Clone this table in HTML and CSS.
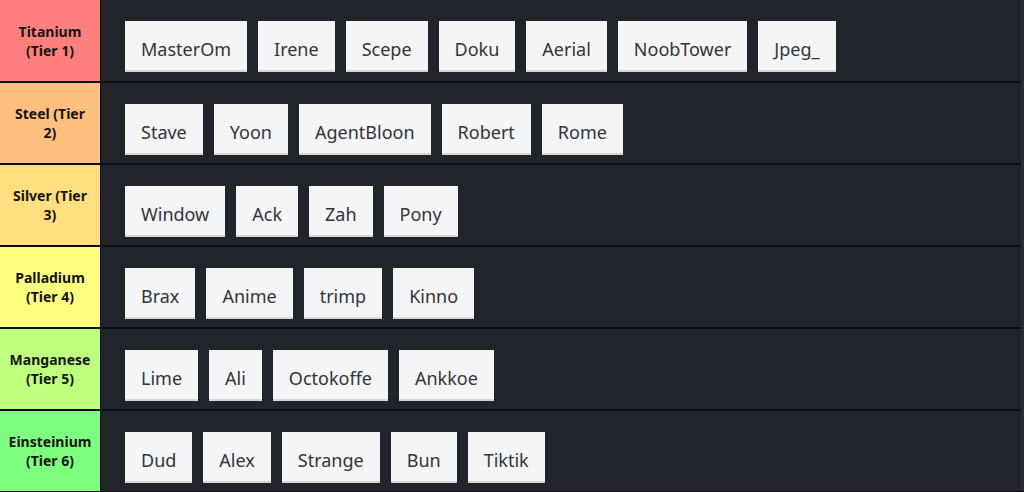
FILE: index.html
```html
<!DOCTYPE html>
<html>
<head>
<meta charset="utf-8">
<link rel="stylesheet" href="styles.css">
</head>
<body>
<div class="board">
  <div class="row">
    <div class="label t1">Titanium (Tier 1)</div>
    <div class="items">
      <div class="item">MasterOm</div><div class="item">Irene</div><div class="item">Scepe</div><div class="item">Doku</div><div class="item">Aerial</div><div class="item">NoobTower</div><div class="item">Jpeg_</div>
    </div>
  </div>
  <div class="row">
    <div class="label t2">Steel (Tier 2)</div>
    <div class="items">
      <div class="item">Stave</div><div class="item">Yoon</div><div class="item">AgentBloon</div><div class="item">Robert</div><div class="item">Rome</div>
    </div>
  </div>
  <div class="row">
    <div class="label t3">Silver (Tier 3)</div>
    <div class="items">
      <div class="item">Window</div><div class="item">Ack</div><div class="item">Zah</div><div class="item">Pony</div>
    </div>
  </div>
  <div class="row">
    <div class="label t4">Palladium (Tier 4)</div>
    <div class="items">
      <div class="item">Brax</div><div class="item">Anime</div><div class="item">trimp</div><div class="item">Kinno</div>
    </div>
  </div>
  <div class="row">
    <div class="label t5">Manganese (Tier 5)</div>
    <div class="items">
      <div class="item">Lime</div><div class="item">Ali</div><div class="item">Octokoffe</div><div class="item">Ankkoe</div>
    </div>
  </div>
  <div class="row">
    <div class="label t6">Einsteinium (Tier 6)</div>
    <div class="items">
      <div class="item">Dud</div><div class="item">Alex</div><div class="item">Strange</div><div class="item">Bun</div><div class="item">Tiktik</div>
    </div>
  </div>
</div>
</body>
</html>
```
FILE: styles.css
```css
* { box-sizing: border-box; }
html, body { margin: 0; padding: 0; }
body {
  width: 1024px;
  height: 492px;
  overflow: hidden;
  background: #111215;
  font-family: "Noto Sans", "Open Sans", sans-serif;
}
.board {
  display: flex;
  flex-direction: column;
  gap: 2px;
  background: #0c0d10;
  border-right: 3px solid #2a2c33;
}
.row {
  display: flex;
  height: 80px;
  gap: 1px;
}
.row:first-child { height: 81px; }
.label {
  width: 100px;
  flex: none;
  display: flex;
  align-items: center;
  justify-content: center;
  text-align: center;
  padding: 0 8px;
  font-weight: 700;
  font-size: 14px;
  line-height: 19px;
  color: #141414;
}
.t1 { background: #ff7f7f; }
.t2 { background: #ffbf7f; }
.t3 { background: #ffdf7f; }
.t4 { background: #ffff7f; }
.t5 { background: #bfff7f; }
.t6 { background: #7fff7f; }
.items {
  flex: 1;
  background: #22242b;
  display: flex;
  align-items: flex-start;
  gap: 11px;
  padding: 21px 0 0 24px;
}
.item {
  height: 51px;
  background: #f4f5f7;
  border-bottom: 2px solid #d5d6da;
  color: #333438;
  font-size: 18px;
  padding: 7px 16px 0;
  display: flex;
  align-items: center;
}
```
